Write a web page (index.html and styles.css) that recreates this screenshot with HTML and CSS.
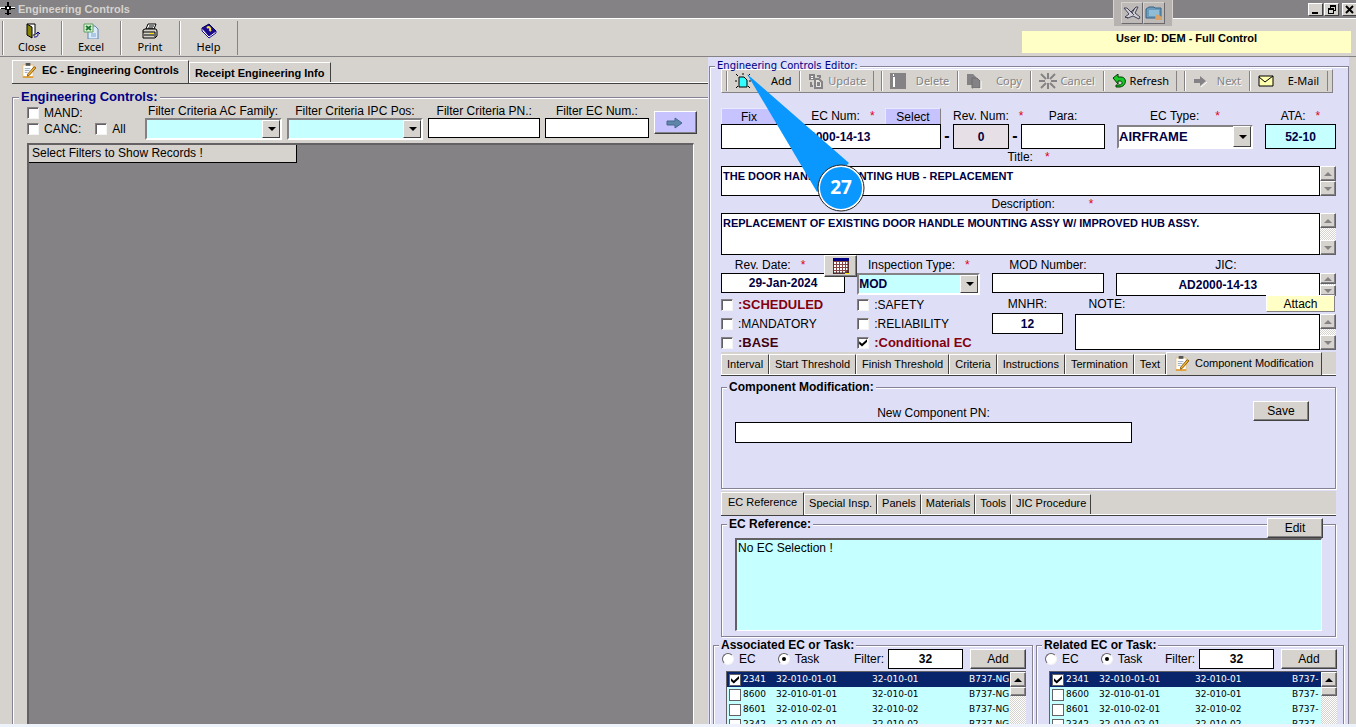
FILE: index.html
```html
<!DOCTYPE html>
<html lang="en">
<head>
  <meta charset="UTF-8" />
  <meta name="viewport" content="width=device-width, initial-scale=1.0" />
  <title>Engineering Controls</title>
  <link rel="stylesheet" href="styles.css">
</head>
<body>

  <!-- Title bar -->
  <header class="titlebar">
    <svg class="plane" viewBox="0 0 16 16" width="16" height="16"><path d="M0 6h15v2H0z" fill="#fff"/><path d="M7 1h2v13H7zM1 7h14v1H1zM5 12h6v1H5zM5 5h6v4H5z" fill="#000"/><path d="M7 6h2v2H7z" fill="#fff"/></svg>
    <h1>Engineering Controls</h1>
    <div class="window-buttons">
      <button aria-label="Minimize"><svg viewBox="0 0 10 9" width="10" height="9"><path d="M1 7h6v2H1z"/></svg></button>
      <button aria-label="Restore"><svg viewBox="0 0 10 9" width="10" height="9"><path d="M3 0h6v6H7V5h1V2H4v1H3zM1 3h6v6H1zM2 5v3h4V5z" fill-rule="evenodd"/></svg></button>
      <button class="close" aria-label="Close window"><svg viewBox="0 0 10 9" width="10" height="9"><path d="M1 1l7 7M8 1L1 8" stroke="#000" stroke-width="2"/></svg></button>
    </div>
    <div class="float-tools">
      <button aria-label="Aircraft"><svg viewBox="0 0 18 16" width="18" height="16"><path d="M1 3l3 0 4 4 5-5 2 0-3 6 5 4-1 2-6-3-5 2-3-1 4-3z" fill="#d0d0d6" stroke="#444458"/><path d="M2 12l3 1M8 7l3 3M12 3l-3 5" stroke="#444458"/></svg></button>
      <button aria-label="Folder"><svg viewBox="0 0 18 16" width="18" height="16"><path d="M1 4l3-2h5l1 1h6v10H1z" fill="#6b9cbd" stroke="#3b6382"/><path d="M4 5h10v6H4z" fill="#8fbdd8"/><path d="M10 12l2-3 5 3v3h-6z" fill="#d6a46a"/></svg></button>
    </div>
  </header>

  <!-- Main toolbar -->
  <div class="toolbar">
    <button>
      <svg viewBox="0 0 16 16" width="16" height="16"><path d="M3 1h8v11h-2" fill="#fff" stroke="#000"/><path d="M3 1l5 3v11l-5-3z" fill="#848200" stroke="#000"/><path d="M10 14c4 0 4-1 4-4M12 11l2-2 2 2" fill="none" stroke="#000084"/></svg>
      Close
    </button>
    <button>
      <svg viewBox="0 0 16 16" width="16" height="16"><path d="M5 3h7l3 3v10H5z" fill="#dcebfa" stroke="#5a86b8"/><path d="M1 1h9v8H1z" fill="#e4f4e0" stroke="#5c9e5c"/><path d="M3 3l5 4M8 3L3 7" stroke="#1e7a2e" stroke-width="2"/><path d="M8 11h5M8 13h5" stroke="#7ea6d2"/></svg>
      Excel
    </button>
    <button>
      <svg viewBox="0 0 16 16" width="16" height="16"><path d="M4 6l2-5h8l-2 5z" fill="#fff" stroke="#000"/><path d="M7 3h5M6 5h5" stroke="#000"/><path d="M1 7l2-1h11l1 2v5l-2 2H1z" fill="#d4d0c8" stroke="#000"/><path d="M1 9h12M2 12h10M13 9v5" stroke="#000"/><path d="M7 10h4v1H7z" fill="#ffe800"/></svg>
      Print
    </button>
    <button>
      <svg viewBox="0 0 16 16" width="16" height="16"><path d="M1 5l7-4 7 7-7 5z" fill="#1b0a8c" stroke="#000058"/><path d="M1 5v3l7 7 7-5V8l-7 5z" fill="#fff" stroke="#1b0a8c"/><path d="M6 5c2-2 4 0 3 2l1 1" fill="none" stroke="#f5e050" stroke-width="2"/></svg>
      Help
    </button>
    <div class="user-id">User ID: DEM - Full Control</div>
  </div>

  <main class="main">

    <!-- Left: record list -->
    <section class="records">
      <div class="tabs tabs-main">
        <button class="tab active">
          <svg viewBox="0 0 16 16" width="15" height="15"><path d="M2 2h11v13H2z" fill="#fff" stroke="#e8c07c"/><path d="M2 15h11" stroke="#e0a03c" stroke-width="2"/><path d="M5 0h5v3H5z" fill="#555"/><path d="M4 6h6M4 8h5M4 10h3" stroke="#9ab"/><path d="M7 12l7-8 2 1-7 8-2 1z" fill="#f2b632" stroke="#8a5a10"/></svg>
          EC - Engineering Controls</button>
        <button class="tab">Receipt Engineering Info</button>
      </div>

      <fieldset class="group group-list">
        <legend>Engineering Controls:</legend>
        <div class="filters">
          <div class="filter-checks">
            <label><input type="checkbox" />MAND:</label>
            <div class="pair">
              <label><input type="checkbox" />CANC:</label>
              <label><input type="checkbox" />All</label>
            </div>
          </div>
          <div class="field">
            <label for="acFamily">Filter Criteria AC Family:</label>
            <span class="combo cyan"><select id="acFamily"><option></option></select></span>
          </div>
          <div class="field">
            <label for="ipcPos">Filter Criteria IPC Pos:</label>
            <span class="combo cyan"><select id="ipcPos"><option></option></select></span>
          </div>
          <div class="field">
            <label for="filterPn">Filter Criteria PN.:</label>
            <input type="text" id="filterPn" />
          </div>
          <div class="field">
            <label for="filterEc">Filter EC Num.:</label>
            <input type="text" id="filterEc" />
          </div>
          <button class="btn go" aria-label="Apply filters"><svg viewBox="0 0 18 12" width="18" height="12"><path d="M1 4h8V1l7 5-7 5V8H1z" fill="#5d86a8" stroke="#46688c"/></svg></button>
        </div>
        <div class="grid-area">
          <div class="grid-head">Select Filters to Show Records !</div>
        </div>
      </fieldset>
    </section>

    <!-- Right: editor -->
    <section class="editor">
      <fieldset class="group group-editor">
        <legend>Engineering Controls Editor:</legend>

        <div class="edit-tools">
          <button class="t-add"><svg viewBox="0 0 16 16" width="16" height="16"><path d="M4 4h5l3 3v7H4z" fill="#3ff" stroke="#000"/><path d="M1 1l2 2M8 0v2M15 1l-2 2M0 8h2M14 8h2M1 15l2-2M15 15l-2-2" stroke="#000"/></svg>Add</button>
          <button class="off"><svg viewBox="0 0 16 16" width="16" height="16"><path d="M1 1h6v6H1z" fill="#848284"/><path d="M3 3h2v1H3zM3 5h2v1H3z" fill="#fff"/><path d="M7 6h4l3 3v6H7z" fill="#e8e6e2" stroke="#848284" stroke-width="2"/><path d="M9 10h3M9 12h3M9 3h3v2M3 9v4h2" fill="none" stroke="#848284" stroke-width="2"/></svg>Update</button>
          <button class="off t-delete"><svg viewBox="0 0 16 16" width="16" height="16"><path d="M0 0h16v16H0z" fill="#848284"/><path d="M3 4h2v10H3zM3 1h1v2H3z" fill="#fff"/></svg>Delete</button>
          <button class="off t-copy"><svg viewBox="0 0 16 16" width="16" height="16"><path d="M1 1h6l3 3v8H1z" fill="#848284"/><path d="M6 5h5l3 3v7H6z" fill="#848284" stroke="#6e6c6e"/><path d="M15 8v8H7" fill="none" stroke="#fff"/></svg>Copy</button>
          <button class="off"><svg viewBox="0 0 18 16" width="18" height="16"><path d="M9 0v6M9 10v6M0 8h6M12 8h6M2 1l5 5M16 1l-5 5M2 15l5-5M16 15l-5-5" stroke="#848284" stroke-width="2"/></svg>Cancel</button>
          <button><svg viewBox="0 0 14 14" width="14" height="14"><path d="M1 4l5-4v3h3c6 0 6 9-1 10H4v-2h3c4 0 4-4 1-4H6v3z" fill="#18c828" stroke="#003c00"/></svg>Refresh</button>
          <button class="off t-next"><svg viewBox="0 0 14 14" width="14" height="14"><path d="M1 5h6V2l6 5-6 5V9H1z" fill="#848284"/><path d="M8 13l6-5" stroke="#fff"/></svg>Next</button>
          <button class="t-mail"><svg viewBox="0 0 16 12" width="16" height="12"><path d="M1 1h14v10H1z" fill="#ffffb0" stroke="#000"/><path d="M1 2l6 5 8-6" fill="none" stroke="#000"/></svg>E-Mail</button>
        </div>

        <div class="row row-ident">
          <div class="field">
            <div class="caption">
              <button class="btn violet">Fix</button>
              <label for="ecNum">EC Num:</label><i>*</i>
              <button class="btn violet">Select</button>
            </div>
            <input type="text" id="ecNum" class="bold" value="AD2000-14-13" />
          </div>
          <span class="dash">-</span>
          <div class="field">
            <label for="revNum">Rev. Num:<i>*</i></label>
            <input type="text" id="revNum" class="bold grey" value="0" />
          </div>
          <span class="dash">-</span>
          <div class="field">
            <label for="para">Para:</label>
            <input type="text" id="para" />
          </div>
          <div class="field">
            <label for="ecType">EC Type:<i>*</i></label>
            <span class="combo"><select id="ecType"><option>AIRFRAME</option></select></span>
          </div>
          <div class="field">
            <label for="ata">ATA:<i>*</i></label>
            <input type="text" id="ata" class="bold cyan" value="52-10" />
          </div>
        </div>

        <label class="wide" for="title">Title:<i>*</i></label>
        <div class="memo memo-title">
          <textarea id="title">THE DOOR HANDLE MOUNTING HUB - REPLACEMENT</textarea>
          <div class="scroll"><button class="up" aria-label="Up"></button><button class="down" aria-label="Down"></button></div>
        </div>

        <label class="wide spaced" for="description">Description:<i>*</i></label>
        <div class="memo memo-description">
          <textarea id="description">REPLACEMENT OF EXISTING DOOR HANDLE MOUNTING ASSY W/ IMPROVED HUB ASSY.</textarea>
          <div class="scroll"><button class="up" aria-label="Up"></button><button class="down" aria-label="Down"></button></div>
        </div>

        <div class="row row-dates">
          <div class="field date">
            <label for="revDate">Rev. Date:<i>*</i></label>
            <input type="text" id="revDate" class="bold" value="29-Jan-2024" />
            <button class="btn calendar" aria-label="Pick date"><svg viewBox="0 0 16 16" width="16" height="16"><path d="M0 2h16v14H0z" fill="#844"/><path d="M0 0h16v3H0z" fill="#000084"/><path d="M1 4h2v2H1zM4 4h2v2H4zM7 4h2v2H7zM10 4h2v2h-2zM13 4h2v2h-2zM1 7h2v2H1zM4 7h2v2H4zM7 7h2v2H7zM10 7h2v2h-2zM13 7h2v2h-2zM1 10h2v2H1zM4 10h2v2H4zM7 10h2v2H7zM10 10h2v2h-2zM13 10h2v2h-2zM1 13h2v2H1zM4 13h2v2H4zM7 13h2v2H7zM10 13h2v2h-2z" fill="#fff"/><path d="M0 3v13M15 3v13M0 15h16" stroke="#222" fill="none"/><path d="M12 15h4v1h-4z" fill="#ffe800"/></svg></button>
          </div>
          <div class="field">
            <label for="inspType">Inspection Type:<i>*</i></label>
            <span class="combo cyan"><select id="inspType"><option>MOD</option></select></span>
          </div>
          <div class="field">
            <label for="modNum">MOD Number:</label>
            <input type="text" id="modNum" />
          </div>
          <div class="field jic">
            <label for="jic">JIC:</label>
            <div class="memo">
              <input type="text" id="jic" class="bold" value="AD2000-14-13" />
              <div class="scroll"><button class="up" aria-label="Up"></button><button class="down" aria-label="Down"></button></div>
            </div>
            <button class="btn attach">Attach</button>
          </div>
        </div>

        <div class="row row-flags">
          <div class="checks">
            <label class="red"><input type="checkbox" />:SCHEDULED</label>
            <label><input type="checkbox" />:MANDATORY</label>
            <label class="dark"><input type="checkbox" />:BASE</label>
          </div>
          <div class="checks">
            <label><input type="checkbox" />:SAFETY</label>
            <label><input type="checkbox" />:RELIABILITY</label>
            <label class="red"><input type="checkbox" checked />:Conditional EC</label>
          </div>
          <div class="field">
            <label for="mnhr">MNHR:</label>
            <input type="text" id="mnhr" class="bold" value="12" />
          </div>
          <div class="field note">
            <label for="note">NOTE:</label>
            <div class="memo">
              <textarea id="note"></textarea>
              <div class="scroll"><button class="up" aria-label="Up"></button><button class="down" aria-label="Down"></button></div>
            </div>
          </div>
        </div>

        <div class="tabs tabs-detail">
          <button class="tab">Interval</button>
          <button class="tab">Start Threshold</button>
          <button class="tab">Finish Threshold</button>
          <button class="tab">Criteria</button>
          <button class="tab">Instructions</button>
          <button class="tab">Termination</button>
          <button class="tab">Text</button>
          <button class="tab active">
            <svg viewBox="0 0 16 16" width="15" height="15"><path d="M2 2h11v13H2z" fill="#fff" stroke="#e8c07c"/><path d="M2 15h11" stroke="#e0a03c" stroke-width="2"/><path d="M5 0h5v3H5z" fill="#555"/><path d="M4 6h6M4 8h5M4 10h3" stroke="#9ab"/><path d="M7 12l7-8 2 1-7 8-2 1z" fill="#f2b632" stroke="#8a5a10"/></svg>
            Component Modification</button>
        </div>

        <fieldset class="group group-modification">
          <legend>Component Modification:</legend>
          <div class="field">
            <label for="newPn">New Component PN:</label>
            <input type="text" id="newPn" />
          </div>
          <button class="btn">Save</button>
        </fieldset>

        <div class="tabs tabs-reference">
          <button class="tab active">EC Reference</button>
          <button class="tab">Special Insp.</button>
          <button class="tab">Panels</button>
          <button class="tab">Materials</button>
          <button class="tab">Tools</button>
          <button class="tab">JIC Procedure</button>
        </div>

        <fieldset class="group group-reference">
          <legend>EC Reference:</legend>
          <textarea aria-label="EC Reference">No EC Selection !</textarea>
          <button class="btn edit">Edit</button>
        </fieldset>

        <div class="links">
          <fieldset class="group group-tasks">
            <legend>Associated EC or Task:</legend>
            <div class="task-bar">
              <label><input type="radio" name="assoc" />EC</label>
              <label><input type="radio" name="assoc" checked />Task</label>
              <label class="filter-label" for="assocFilter">Filter:</label>
              <input type="text" id="assocFilter" value="32" />
              <button class="btn">Add</button>
            </div>
            <div class="task-list">
              <table>
                <tr class="selected"><td><label><input type="checkbox" checked />2341</label></td><td>32-010-01-01</td><td>32-010-01</td><td>B737-NG</td></tr>
                <tr><td><label><input type="checkbox" />8600</label></td><td>32-010-01-01</td><td>32-010-01</td><td>B737-NG</td></tr>
                <tr><td><label><input type="checkbox" />8601</label></td><td>32-010-02-01</td><td>32-010-02</td><td>B737-NG</td></tr>
                <tr><td><label><input type="checkbox" />2342</label></td><td>32-010-02-01</td><td>32-010-02</td><td>B737-NG</td></tr>
              </table>
              <div class="scroll"><button class="up" aria-label="Up"></button><div class="thumb"></div></div>
            </div>
          </fieldset>

          <fieldset class="group group-tasks">
            <legend>Related EC or Task:</legend>
            <div class="task-bar">
              <label><input type="radio" name="related" />EC</label>
              <label><input type="radio" name="related" checked />Task</label>
              <label class="filter-label" for="relatedFilter">Filter:</label>
              <input type="text" id="relatedFilter" value="32" />
              <button class="btn">Add</button>
            </div>
            <div class="task-list">
              <table>
                <tr class="selected"><td><label><input type="checkbox" checked />2341</label></td><td>32-010-01-01</td><td>32-010-01</td><td>B737-</td></tr>
                <tr><td><label><input type="checkbox" />8600</label></td><td>32-010-01-01</td><td>32-010-01</td><td>B737-</td></tr>
                <tr><td><label><input type="checkbox" />8601</label></td><td>32-010-02-01</td><td>32-010-02</td><td>B737-</td></tr>
                <tr><td><label><input type="checkbox" />2342</label></td><td>32-010-02-01</td><td>32-010-02</td><td>B737-</td></tr>
              </table>
              <div class="scroll"><button class="up" aria-label="Up"></button><div class="thumb"></div></div>
            </div>
          </fieldset>
        </div>
      </fieldset>

      <!-- Step marker pointing at the Add button -->
      <div class="callout">
        <svg viewBox="0 0 120 140" width="120" height="140"><path d="M0 0L102 89 70 118z" fill="#0a98ff"/><circle cx="94" cy="114" r="22" fill="#0a98ff" stroke="#fff" stroke-width="2"/><circle cx="94" cy="114" r="23" fill="none" stroke="#222"/></svg>
        <span>27</span>
      </div>
    </section>

  </main>

</body>
</html>
```
FILE: styles.css
```css
* { box-sizing: border-box; }
body { margin: 0; height: 100vh; overflow: hidden; display: flex; flex-direction: column; border-bottom: 3px solid #eef2fa; background: #d6d3ce; color: #000; font: 12px/16px "Liberation Sans", Arial, sans-serif; }
button, input, select, textarea { margin: 0; border-radius: 0; font: inherit; color: inherit; }
button { display: flex; align-items: center; justify-content: center; padding: 0; border: 0; background: none; white-space: nowrap; }
svg { flex: none; display: block; }
i { color: #e00020; font-style: normal; }
label { white-space: nowrap; }

/* title bar */
.titlebar { position: relative; flex: none; display: flex; align-items: center; height: 18px; background: #848284; color: #d6d3ce; }
.titlebar h1 { flex: 1; margin: 0 0 0 2px; font-size: 11px; font-weight: bold; }
.window-buttons { display: flex; gap: 1px; overflow: hidden; }
.window-buttons button { width: 15px; height: 13px; background: #d6d3ce; border: 1px solid; border-color: #fff #424142 #424142 #fff; }
.window-buttons .close { width: 14px; margin-left: 2px; border-right: 0; }
.float-tools { position: absolute; z-index: 1; top: 0; right: 183px; display: flex; padding: 2px 7px; background: #b5b2b0; border: 1px solid #d6d3ce; border-top: 0; }
.float-tools button { width: 22px; height: 22px; background: #bdbab8; border: 1px solid; border-color: #d6d3ce #6b696b #6b696b #d6d3ce; }

/* main toolbar */
.toolbar { flex: none; display: flex; height: 39px; padding: 2px 5px 1px 2px; border-top: 1px solid #fff; border-bottom: 1px solid #848284; }
.toolbar button { flex-direction: column; justify-content: flex-start; width: 59px; padding-top: 2px; font: 11px/15px "Noto Sans", sans-serif; border-left: 1px solid #848284; box-shadow: inset 1px 0 #fff; }
.toolbar button:nth-of-type(4) { border-right: 1px solid #848284; }
.user-id { width: 329px; margin: 10px 0 2px auto; background: #ffffc6; font-size: 11px; font-weight: bold; line-height: 15px; text-align: center; }

.main { flex: 1; min-height: 0; display: grid; grid-template-columns: 708fr 641fr; grid-template-rows: minmax(0, 1fr); padding-right: 7px; }

/* shared controls */
.group { min-width: 0; margin: 0; padding: 0; border: 1px solid #848294; box-shadow: 1px 1px #fff, inset 1px 1px #fff; }
.group legend { padding: 0 2px; background: #dedff7; font-size: 12px; font-weight: bold; line-height: 14px; }
.field { display: flex; flex-direction: column; min-width: 0; }
.field > label, .caption { height: 16px; text-align: center; }
.field label i { margin-left: 10px; }
input[type="text"] { width: 100%; min-width: 0; height: 21px; padding: 0 2px; border: 1px solid #000; background: #fff; text-align: center; }
.bold { color: #000042; font-weight: bold; }
input.cyan { background: #c6ffff; }
input.grey { background: #e6e0e6; }
.btn { height: 20px; background: #d6d3ce; border: 1px solid; border-color: #fff #424142 #424142 #fff; box-shadow: inset -1px -1px #848284; }
.btn.violet { height: 17px; background: #c6c3ff; border-color: #e8e8ff #848284 #848284 #e8e8ff; box-shadow: none; }
.combo { position: relative; display: block; }
.combo select { appearance: none; display: block; width: 100%; height: 22px; padding: 0 18px 0 0; border: 2px solid; border-color: #848284 #fff #fff #848284; background: #fff; color: #000042; font-size: 12px; font-weight: bold; }
.combo.cyan select { background: #c6ffff; }
.combo::before { content: ""; position: absolute; top: 2px; right: 2px; bottom: 2px; width: 16px; background: #d6d3ce; border: 1px solid; border-color: #fff #424142 #424142 #fff; pointer-events: none; }
.combo::after { content: ""; position: absolute; top: 50%; right: 6px; margin-top: -2px; border: 4px solid transparent; border-top-color: #000; border-bottom: 0; pointer-events: none; }
input[type="checkbox"], input[type="radio"] { appearance: none; flex: none; position: relative; width: 12px; height: 12px; background: #fff; border: 1px solid; border-color: #848284 #f4f4f4 #f4f4f4 #848284; }
input[type="checkbox"] { box-shadow: inset 1px 1px #635f63; }
input[type="checkbox"]:checked::after { content: ""; position: absolute; inset: 1px; background: #000; clip-path: polygon(0 35%, 35% 65%, 100% 5%, 100% 40%, 35% 100%, 0 70%); }
input[type="radio"] { border-radius: 50%; border-color: #635f63 #f4f4f4 #f4f4f4 #635f63; }
input[type="radio"]:checked::after { content: ""; position: absolute; inset: 3px; border-radius: 50%; background: #000; }
.scroll { flex: none; display: flex; flex-direction: column; justify-content: space-between; width: 16px; background: repeating-conic-gradient(#fff 0 25%, #d6d3ce 0 50%) 0 0 / 2px 2px; }
.scroll button, .thumb { height: 15px; background: #d6d3ce; border: 1px solid; border-color: #fff #636163 #636163 #fff; box-shadow: inset -1px -1px #848284; }
.scroll button::after { content: ""; border: 4px solid transparent; }
.scroll .up::after { border-top: 0; border-bottom-color: #848284; }
.scroll .down::after { border-bottom: 0; border-top-color: #848284; }

/* tabs */
.tabs { display: flex; align-items: flex-end; background: #d6d3ce; border-bottom: 1px solid #424142; box-shadow: inset 0 -1px #fff; font-size: 11px; }
.tab { height: 20px; margin-bottom: 1px; padding: 0 4px; border: solid; border-width: 1px 1px 0; border-color: #fff #424142 #fff #fff; font-size: 11px; }
.tab.active { height: 23px; margin-bottom: 0; background: #d6d3ce; padding-bottom: 2px; }

/* record list */
.records { display: flex; flex-direction: column; min-width: 0; padding: 3px 0 0 12px; }
.tabs-main .tab { padding: 0 6px 0 5px; font-weight: bold; }
.tabs-main .active { gap: 6px; padding: 0 9px 4px 8px; }
.group-list { flex: 1; display: flex; flex-direction: column; margin-top: 5px; border-right: 0; border-bottom: 0; }
.group-list legend { margin-left: 6px; background: #d6d3ce; color: #000084; font-size: 13px; line-height: 16px; }
.group-list > * { margin-left: 14px; }
.filters { display: grid; grid-template-columns: 112fr 136fr 136fr 111fr 103fr 43fr; column-gap: 5px; margin-right: 11px; padding-bottom: 3px; }
.filters .field > label { height: 15px; text-align: center; }
.filters .field { margin-top: -2px; }
.filters input[type="text"] { height: 20px; }
.filter-checks label { display: flex; align-items: center; gap: 5px; height: 16px; }
.pair { display: flex; gap: 14px; }
.go { align-self: center; height: 23px; background: #c6c3ff; }
.grid-area { flex: 1; margin-right: 14px; background: #848284; border-top: 2px solid #636163; border-left: 2px solid #636163; border-right: 1px solid #fff; }
.grid-head { width: 268px; height: 18px; padding-left: 3px; background: #d6d3ce; border: solid #000; border-width: 0 1px 1px 0; line-height: 17px; }

/* editor */
.editor { position: relative; min-width: 0; overflow: hidden; padding: 3px 0 0 1px; background: #dedff7; }
.group-editor { padding: 0 12px 0 11px; }
.group-editor > legend { margin-left: -6px; color: #000084; font: 10px/12px "DejaVu Sans", sans-serif; }
.edit-tools { display: flex; height: 24px; margin: -3px 3px 15px 0; padding: 1px 4px; background: #d6d3ce; border: 1px solid; border-color: #fff #848284 #848284 #fff; }
.edit-tools button { flex: auto; gap: 4px; font: 11px/16px "Noto Sans", sans-serif; border-left: 1px solid #848284; box-shadow: inset 1px 0 #fff; }
.edit-tools .off { color: #848284; text-shadow: 1px 1px #fff; }
.edit-tools .t-add { gap: 20px; }
.edit-tools .t-delete, .edit-tools .t-next { margin-left: 7px; border-left: 1px solid #848284; box-shadow: -7px 0 #d6d3ce, -8px 0 #848284, inset 1px 0 #fff; gap: 10px; }
.edit-tools .t-copy, .edit-tools .t-mail { gap: 14px; }
.edit-tools .t-mail { border-right: 1px solid #848284; }
.row { display: grid; }
.row-ident { grid-template-columns: 220fr 12px 56fr 12px 84fr 148fr 83fr; }
.row-ident input[type="text"] { height: 25px; }
.row-ident .field:nth-of-type(n+4) { margin-left: 12px; }
.row-ident .combo select { height: 24px; font-size: 13px; }
.row-ident .combo { padding-top: 1px; }
.dash { align-self: end; height: 24px; font-size: 16px; font-weight: bold; line-height: 22px; text-align: center; }
.caption { display: flex; justify-content: space-between; }
.caption .btn { width: 56px; }
.caption label { margin-left: 24px; }
.field:nth-of-type(n+4) > label[for="ecType"] i { margin-left: 16px; }
.wide { display: block; height: 17px; text-align: center; }
.wide i { margin-left: 12px; }
.spaced { padding-left: 28px; }
.spaced i { margin-left: 34px; }
.memo { display: flex; }
.memo textarea { flex: 1; min-width: 0; padding: 1px; resize: none; overflow: hidden; border: 1px solid #000; background: #fff; color: #000042; font-size: 11px; font-weight: bold; }
.memo-title { height: 30px; }
.memo-description { height: 42px; }
.row-dates { grid-template-columns: 124fr 123fr 111fr 220fr; column-gap: 12px; height: 41px; padding-top: 2px; }
.row-dates input[type="text"] { height: 20px; }
.date, .jic { position: relative; }
.date label { padding-right: 26px; }
.calendar { position: absolute; top: -2px; right: -12px; width: 33px; height: 22px; }
.row-dates .jic input { height: 23px; }
.jic .scroll button { height: 11px; }
.attach { position: absolute; z-index: 1; top: 38px; right: 1px; width: 69px; height: 17px; background: #ffffc6; border-color: #fff #848284 #848284 #fff; box-shadow: none; }
.row-flags { grid-template-columns: 124fr 123fr 70fr 261fr; column-gap: 12px; height: 56px; }
.checks { display: flex; flex-direction: column; gap: 2px; }
.checks label { display: flex; align-items: center; gap: 5px; height: 17px; }
.checks .red { color: #840010; font-size: 13px; font-weight: bold; }
.checks .dark { color: #420010; font-size: 13px; font-weight: bold; }
.note > label { padding-left: 14px; text-align: left; }
.note .memo { height: 36px; margin-top: 2px; }
.row-flags input[type="text"] { margin-top: 1px; }
.tabs-detail { height: 24px; }
.tabs-detail .tab { padding: 0 5px 2px; }
.tabs-detail .tab.active { gap: 6px; padding: 0 7px 2px; }
.group-modification { display: flex; align-items: flex-start; justify-content: space-between; height: 109px; margin-top: 4px; padding: 0 26px 0 13px; }
.group-modification .field { width: 397px; padding-top: 11px; }
.group-modification .field label { height: 17px; }
.group-modification .btn { width: 56px; margin-top: 7px; }
.group-modification legend, .group-reference legend { margin-left: -8px; }
.tabs-reference { height: 25px; margin-top: 2px; }
.tabs-reference .tab { padding-bottom: 3px; }
.tabs-reference .tab.active { padding: 0 6px 5px; }
.group-reference { position: relative; height: 120px; margin-top: 1px; padding: 7px 13px 0; }
.group-reference textarea { display: block; width: 100%; height: 93px; padding: 0 1px; resize: none; background: #c6ffff; border: solid; border-width: 2px 1px 1px 2px; border-color: #636163 #fff #fff #636163; }
.edit { position: absolute; top: -13px; right: 12px; width: 56px; }

.links { display: grid; grid-template-columns: 321fr 309fr; gap: 3px; margin: 1px -8px 0; }
.group-tasks { padding: 0 6px 0 12px; }
.group-tasks legend { margin-left: -7px; }
.task-bar { display: flex; align-items: center; gap: 4px; height: 20px; margin: -3px 0 2px -4px; }
.task-bar label { display: flex; align-items: center; gap: 5px; }
.task-bar label + label { margin-left: 18px; }
.task-bar .filter-label { margin-left: auto; }
.task-bar input[type="text"] { width: 75px; height: 20px; font-weight: bold; }
.task-bar .btn { width: 56px; margin-left: 3px; }
.task-list { display: flex; height: 150px; overflow: hidden; border: solid #636163; border-width: 1px 0 0 1px; background: #c6ffff; }
.task-list table { flex: 1; width: 0; border-collapse: collapse; table-layout: fixed; font: 9px/15px "DejaVu Sans", sans-serif; align-self: flex-start; }
.task-list td { padding: 0; height: 15px; overflow: hidden; white-space: nowrap; }
.task-list td:nth-child(1) { width: 49px; }
.task-list td:nth-child(2) { width: 96px; }
.task-list td:nth-child(3) { width: 97px; }
.task-list td label { display: flex; align-items: center; gap: 2px; padding-left: 2px; }
.task-list input { width: 12px; border: 1px solid #636163; box-shadow: none; }
.task-list .selected { background: #08246b; color: #fff; }
.task-list .scroll { justify-content: flex-start; }
.task-list .up::after { border-bottom-color: #000; }
.thumb { height: 9px; }

.callout { position: absolute; z-index: 2; top: 17px; left: 39px; pointer-events: none; }
.callout span { position: absolute; top: 101px; left: 71px; width: 46px; color: #fff; font: bold 19px/24px "Noto Sans", sans-serif; text-align: center; }
```
